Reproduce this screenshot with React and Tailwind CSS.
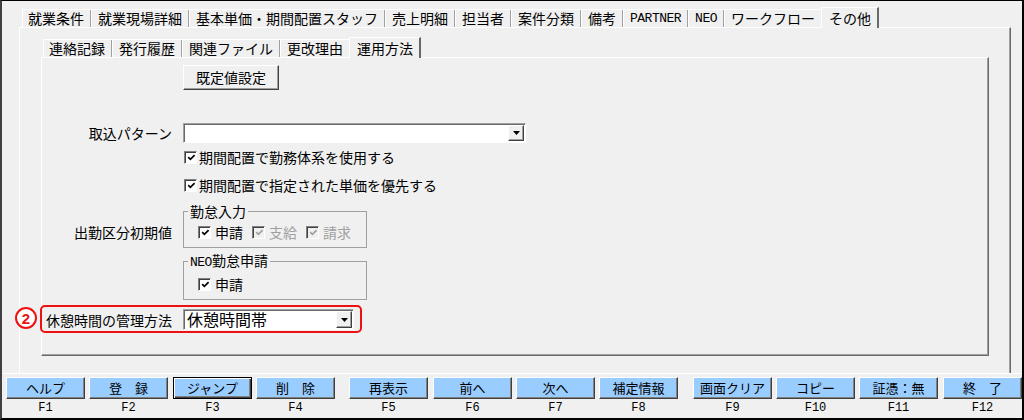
import React from 'react';

const outerTabs = [
  { label: '就業条件' }, { label: '就業現場詳細' }, { label: '基本単価・期間配置スタッフ' }, { label: '売上明細' },
  { label: '担当者' }, { label: '案件分類' }, { label: '備考' }, { label: 'PARTNER', latin: true }, { label: 'NEO', latin: true }, { label: 'ワークフロー' },
];
const innerTabs = [{ label: '連絡記録' }, { label: '発行履歴' }, { label: '関連ファイル' }, { label: '更改理由' }];

const fkeys = [
  { label: 'ヘルプ', key: 'F1', gap: 'ml-0' },
  { label: '登　録', key: 'F2', gap: 'ml-[4px]' },
  { label: 'ジャンプ', key: 'F3', gap: 'ml-[5px]', focus: true },
  { label: '削　除', key: 'F4', gap: 'ml-[4px]' },
  { label: '再表示', key: 'F5', gap: 'ml-[14px]' },
  { label: '前へ', key: 'F6', gap: 'ml-[5px]' },
  { label: '次へ', key: 'F7', gap: 'ml-[4px]' },
  { label: '補定情報', key: 'F8', gap: 'ml-[4px]' },
  { label: '画面クリア', key: 'F9', gap: 'ml-[15px]' },
  { label: 'コピー', key: 'F10', gap: 'ml-[4px]' },
  { label: '証憑：無', key: 'F11', gap: 'ml-[4px]' },
  { label: '終　了', key: 'F12', gap: 'ml-[5px]' },
];

function TabStrip({ tabs, active }) {
  return (
    <div className="flex items-end h-[20px]">
      <div className="flex h-[18px] border-t border-l border-white">
        {tabs.map((t, i) => (
          <React.Fragment key={t.label}>
            <span className={`${i === 0 ? 'pl-[5px]' : 'pl-[6px]'} pr-[6px] leading-[17px] whitespace-nowrap ${t.latin ? "font-['Liberation_Mono',monospace] text-[13px] tracking-[-0.5px]" : ''}`}>{t.label}</span>
            {i < tabs.length - 1 && <span className="w-[2px] border-l border-l-[#a0a0a0] border-r border-r-white" />}
          </React.Fragment>
        ))}
      </div>
      <div className="h-[21px] -mb-px border-t border-l border-white border-r-2 border-r-[#696969] bg-[#f0f0f0] pl-[7px] pr-[6px] pt-px leading-[18px] whitespace-nowrap">{active}</div>
    </div>
  );
}

function Check({ disabled }) {
  return (
    <span className={`flex w-[13px] h-[13px] shrink-0 items-center justify-center border border-t-[#808080] border-l-[#808080] border-r-white border-b-white shadow-[inset_1px_1px_0_#404040] ${disabled ? 'bg-[#f0f0f0]' : 'bg-white'}`}>
      <svg width="9" height="9" viewBox="0 0 9 9" className="ml-px mt-px">
        <path d="M1.2 4.2 L3.4 6.4 L7.6 2.2" fill="none" stroke={disabled ? '#a0a0a0' : '#000'} strokeWidth="1.7" />
      </svg>
    </span>
  );
}

function Arrow() {
  return <svg width="7" height="4" viewBox="0 0 7 4"><polygon points="0,0 7,0 3.5,4" fill="#000" /></svg>;
}

function Combo({ className, children }) {
  return (
    <div className={`${className} flex bg-white border border-t-[#a0a0a0] border-l-[#a0a0a0] border-r-white border-b-white shadow-[inset_1px_1px_0_#696969] p-px`}>
      <div className="flex-1 flex items-center pl-[2px] whitespace-nowrap">{children}</div>
      <div className="w-[16px] bg-[#f0f0f0] border border-t-white border-l-white border-r-[#404040] border-b-[#404040] shadow-[inset_-1px_-1px_0_#a0a0a0] flex items-center justify-center">
        <Arrow />
      </div>
    </div>
  );
}

function CheckRow({ mt, text }) {
  return (
    <div className={`flex ${mt}`}>
      <div className="w-[130px]" />
      <div className="ml-[12px] h-[16px] flex items-center gap-[2px]">
        <Check />
        <span className="leading-[16px] whitespace-nowrap">{text}</span>
      </div>
    </div>
  );
}

function Item({ label, disabled }) {
  return (
    <div className="flex items-center gap-[4px]">
      <Check disabled={disabled} />
      <span className={`leading-[16px] ${disabled ? 'text-[#a0a0a0]' : ''}`}>{label}</span>
    </div>
  );
}

export default function App() {
  return (
    <div className="w-[1024px] h-[420px] overflow-hidden bg-[#f0f0f0] border-t border-t-black border-l-2 border-l-[#404040] border-r-2 border-r-black border-b-2 border-b-black flex flex-col font-['Noto_Sans_CJK_JP',sans-serif] text-[14px] text-black">
      <div className="ml-[20px] mt-[6px] h-[20px] shrink-0 relative z-10">
        <TabStrip tabs={outerTabs} active="その他" />
      </div>

      <div className="ml-[17px] w-[992px] h-[346px] shrink-0 border-t border-l border-white border-r border-r-[#696969] shadow-[inset_-1px_0_0_#a0a0a0] flex flex-col">
        <div className="ml-[23px] mt-[9px] h-[20px] shrink-0 relative z-10">
          <TabStrip tabs={innerTabs} active="運用方法" />
        </div>

        <div className="ml-[21px] w-[948px] h-[299px] shrink-0 border-t border-l border-white border-r border-b border-r-[#696969] border-b-[#696969] shadow-[inset_-1px_-1px_0_#a0a0a0] flex flex-col">
          <div className="flex mt-[7px]">
            <div className="w-[130px]" />
            <div className="ml-[11px] w-[96px] h-[25px] flex items-center justify-center bg-[#f0f0f0] border border-t-white border-l-white border-r-[#404040] border-b-[#404040] shadow-[inset_-1px_-1px_0_#a0a0a0]">既定値設定</div>
          </div>

          <div className="flex items-center mt-[33px]">
            <div className="w-[130px] text-right leading-[16px]">取込パターン</div>
            <Combo className="ml-[11px] w-[343px] h-[20px]" />
          </div>

          <CheckRow mt="mt-[6px]" text="期間配置で勤務体系を使用する" />
          <CheckRow mt="mt-[12px]" text="期間配置で指定された単価を優先する" />

          <div className="flex items-start mt-[10px]">
            <div className="w-[130px] text-right leading-[16px] mt-[21px]">出勤区分初期値</div>
            <fieldset className="ml-[11px] w-[184px] border border-[#a0a0a0] pb-[7px]">
              <legend className="ml-[4px] px-[2px] leading-[16px]">勤怠入力</legend>
              <div className="mt-[5px] pl-[14px] h-[16px] flex items-center gap-[9px]">
                <Item label="申請" />
                <Item label="支給" disabled />
                <Item label="請求" disabled />
              </div>
            </fieldset>
          </div>

          <div className="flex items-start mt-[4px]">
            <div className="w-[130px]" />
            <fieldset className="ml-[11px] w-[184px] border border-[#a0a0a0] pb-[7px]">
              <legend className="ml-[4px] px-[2px] leading-[16px]"><span className="font-['Liberation_Mono',monospace] text-[13px] tracking-[-0.5px]">NEO</span>勤怠申請</legend>
              <div className="mt-[5px] pl-[14px] h-[16px] flex items-center">
                <Item label="申請" />
              </div>
            </fieldset>
          </div>

          <div className="relative flex items-center mt-[9px] h-[21px]">
            <div className="w-[130px] text-right leading-[16px]">休憩時間の管理方法</div>
            <Combo className="ml-[11px] w-[171px] h-[21px]">
              <span className="text-[16px] leading-[19px]">休憩時間帯</span>
            </Combo>
            <div className="absolute left-[-2px] top-[-4px] w-[322px] h-[28px] border-2 border-[#ee1111] rounded-[5px]" />
            <div className="absolute left-[-27px] top-[-2px] w-[22px] h-[22px] rounded-full border-2 border-[#ee1111] bg-white flex items-center justify-center text-[#ee1111] font-bold text-[15px] leading-none font-['Liberation_Sans',sans-serif]">2</div>
          </div>
        </div>
      </div>

      <div className="flex-1 border-t border-white pt-[3px] pl-[4px] flex">
        {fkeys.map((k) => (
          <div key={k.key} className={`${k.gap} w-[79px] shrink-0 flex flex-col items-center`}>
            <div className={`w-full h-[22px] flex items-center justify-center bg-[#99ccff] text-[13px] whitespace-nowrap border ${k.focus ? 'border-black shadow-[inset_1px_1px_0_white,inset_-1px_-1px_0_#404040,inset_-2px_-2px_0_#808080]' : 'border-t-white border-l-white border-r-[#404040] border-b-[#404040] shadow-[inset_-1px_-1px_0_#808080]'}`}>{k.label}</div>
            <div className="mt-[2px] leading-[14px] text-[12px] font-['Liberation_Mono',monospace]">{k.key}</div>
          </div>
        ))}
      </div>
    </div>
  );
}
